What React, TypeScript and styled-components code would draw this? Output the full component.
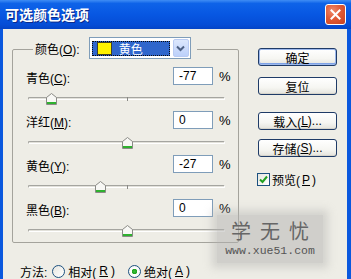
import styled, { createGlobalStyle } from 'styled-components'

const GlobalStyle = createGlobalStyle`
   html, body {
      margin: 0;
      padding: 0;
      overflow: hidden;
      background: #eeede6;
   }
   * {
      box-sizing: border-box;
   }
`

const FONT = `"Liberation Sans", "Noto Sans CJK SC", sans-serif`

const sliders = [
   { name: '青色', key: 'C', value: -77 },
   { name: '洋红', key: 'M', value: 0 },
   { name: '黄色', key: 'Y', value: -27 },
   { name: '黑色', key: 'B', value: 0 },
]

const Mnemonic = ({ text, k, tail = '' }: { text: string; k: string; tail?: string }) => (
   <>
      {text}(<U>{k}</U>){tail}
   </>
)

const Thumb = () => (
   <svg width="11" height="12" viewBox="0 0 11 12">
      <path d="M0.5 4.5 L5.5 0.5 L10.5 4.5 V11.5 H0.5 Z" fill="#f8f8f5" stroke="#8a8a86" />
      <rect x="1" y="9" width="9" height="2" fill="#2fb12f" />
   </svg>
)

const App = () => {
   return (
      <>
         <GlobalStyle />
         <Window>
            <TitleBar>
               <Title>可选颜色选项</Title>
               <CloseButton>
                  <svg width="11" height="11" viewBox="0 0 11 11">
                     <path d="M1.5 1.5 L9.5 9.5 M9.5 1.5 L1.5 9.5" stroke="#fff" strokeWidth="2" strokeLinecap="square" />
                  </svg>
               </CloseButton>
            </TitleBar>
            <Body>
               <Main>
                  <Group>
                     <Legend>
                        <LegendLabel>
                           <Mnemonic text="颜色" k="O" tail=":" />
                        </LegendLabel>
                        <Dropdown>
                           <Selected>
                              <Swatch />
                              <SelectedText>黄色</SelectedText>
                           </Selected>
                           <Arrow>
                              <svg width="9" height="7" viewBox="0 0 9 7">
                                 <path d="M1 1.5 L4.5 5 L8 1.5" stroke="#4d6185" strokeWidth="2" fill="none" />
                              </svg>
                           </Arrow>
                        </Dropdown>
                     </Legend>
                     {sliders.map((s) => (
                        <SliderBlock key={s.key}>
                           <LabelRow>
                              <RowLabel>
                                 <Mnemonic text={s.name} k={s.key} tail=":" />
                              </RowLabel>
                              <ValueBox>{s.value}</ValueBox>
                              <Percent>%</Percent>
                           </LabelRow>
                           <SliderArea>
                              <Track>
                                 <Tick />
                                 <ThumbWrap style={{ left: `${50 + s.value / 2}%` }}>
                                    <Thumb />
                                 </ThumbWrap>
                              </Track>
                           </SliderArea>
                        </SliderBlock>
                     ))}
                  </Group>
                  <ButtonColumn>
                     <Button $default $mt={17}>确定</Button>
                     <Button $mt={11}>复位</Button>
                     <Button $mt={17}>
                        <Mnemonic text="载入" k="L" tail="..." />
                     </Button>
                     <Button $mt={9}>
                        <Mnemonic text="存储" k="S" tail="..." />
                     </Button>
                     <CheckRow>
                        <CheckBox>
                           <svg width="9" height="9" viewBox="0 0 9 9">
                              <path d="M1 4.5 L3.5 7 L8 1.5" stroke="#21a121" strokeWidth="2" fill="none" />
                           </svg>
                        </CheckBox>
                        <Mnemonic text="预览" k="P" />
                     </CheckRow>
                  </ButtonColumn>
               </Main>
               <MethodRow>
                  <span>方法:</span>
                  <RadioOption $ml={5}>
                     <Radio />
                     <Mnemonic text="相对" k="R" />
                  </RadioOption>
                  <RadioOption $ml={13}>
                     <Radio $checked />
                     <Mnemonic text="绝对" k="A" />
                  </RadioOption>
               </MethodRow>
               <Watermark>
                  <WatermarkTitle>学无忧</WatermarkTitle>
                  <WatermarkUrl>www.xue51.com</WatermarkUrl>
               </Watermark>
            </Body>
         </Window>
      </>
   )
}

export default App

const Window = styled.div`
   width: 351px;
   height: 279px;
   display: flex;
   flex-direction: column;
   background: #0a58de;
   overflow: hidden;
   font-family: ${FONT};
   font-size: 12px;
   color: #000;
`
const TitleBar = styled.div`
   height: 29px;
   flex-shrink: 0;
   display: flex;
   align-items: center;
   justify-content: space-between;
   padding: 0 5px 1px 5px;
   background: linear-gradient(
      to bottom,
      #3f8df4 0,
      #0e63e8 12%,
      #0757e2 50%,
      #054dd6 85%,
      #0444c6 100%
   );
`
const Title = styled.div`
   color: #fff;
   font-family: "Noto Sans CJK SC", sans-serif;
   font-weight: bold;
   font-size: 14px;
   text-shadow: 1px 1px 0 #0a2a8a;
`
const CloseButton = styled.div`
   width: 21px;
   height: 21px;
   border: 1px solid #fff;
   border-radius: 3px;
   background: radial-gradient(circle at 35% 30%, #f08a6c 0, #e05a36 45%, #c8401e 100%);
   display: flex;
   align-items: center;
   justify-content: center;
`
const Body = styled.div`
   flex: 1;
   position: relative;
   margin: 0 4px 0 3px;
   background: #eeede6;
   padding: 2px 0 0 9px;
`
const Main = styled.div`
   display: flex;
   align-items: flex-start;
`
const Group = styled.fieldset`
   width: 227px;
   margin: 0;
   padding: 0 7px 2px 13px;
   border: 1px solid #a4a39c;
   border-radius: 2px;
`
const Legend = styled.legend`
   display: flex;
   align-items: center;
   margin-left: 7px;
   padding: 6px 6px 8px 2px;
`
const LegendLabel = styled.span`
   margin-right: 9px;
`
const U = styled.span`
   text-decoration: underline;
`
const Dropdown = styled.div`
   width: 102px;
   height: 22px;
   display: flex;
   padding: 1px;
   border: 1px solid #7f9db9;
   background: #fff;
`
const Selected = styled.div`
   flex: 1;
   margin: 2px 3px 1px 1px;
   display: flex;
   align-items: center;
   padding-left: 5px;
   background: #2f66cc;
   outline: 1px dotted #0a0a0a;
   outline-offset: -1px;
`
const Swatch = styled.div`
   width: 15px;
   height: 13px;
   background: #fff200;
   border: 1px solid #40402a;
`
const SelectedText = styled.span`
   color: #fff;
   margin-left: 7px;
   font-size: 12px;
`
const Arrow = styled.div`
   width: 16px;
   display: flex;
   align-items: center;
   justify-content: center;
   border-radius: 2px;
   border: 1px solid #b9cbf3;
   background: linear-gradient(to bottom, #dce7fd, #bcd0fa);
`
const SliderBlock = styled.div`
   & + & {
      margin-top: 3px;
   }
`
const LabelRow = styled.div`
   height: 18px;
   display: flex;
   align-items: center;
`
const RowLabel = styled.span`
   flex: 1;
   padding-top: 2px;
`
const ValueBox = styled.div`
   width: 40px;
   height: 18px;
   border: 1px solid #7f9db9;
   background: #fff;
   padding-left: 5px;
   line-height: 16px;
`
const Percent = styled.span`
   width: 12px;
   margin-left: 6px;
   font-size: 13px;
`
const SliderArea = styled.div`
   height: 20px;
   margin: 3px 6px 0 2px;
   display: flex;
   align-items: center;
`
const Track = styled.div`
   position: relative;
   width: 100%;
   height: 3px;
   border-radius: 2px;
   border-top: 1px solid #a5a5a0;
   border-left: 1px solid #a5a5a0;
   border-bottom: 1px solid #ffffff;
   border-right: 1px solid #ffffff;
   background: #e2e1da;
`
const Tick = styled.div`
   position: absolute;
   left: 50%;
   top: -1px;
   width: 1px;
   height: 4px;
   background: #8a8a86;
`
const ThumbWrap = styled.div`
   position: absolute;
   top: -5px;
   width: 11px;
   height: 12px;
   margin-left: -5px;
   display: flex;
`
const ButtonColumn = styled.div`
   display: flex;
   flex-direction: column;
   margin-left: 19px;
`
const Button = styled.div<{ $default?: boolean; $mt: number }>`
   width: 79px;
   height: 18px;
   margin-top: ${(p) => p.$mt}px;
   display: flex;
   align-items: center;
   justify-content: center;
   border: 1px solid #1f3b67;
   border-radius: 3px;
   background: linear-gradient(to bottom, #ffffff 0, #f6f6f2 60%, #e4e3dc 100%);
   box-shadow: ${(p) => (p.$default ? 'inset 0 0 0 1px #9cb8ec, inset 0 -1px 0 1px #7ea2e6' : 'inset 0 -1px 0 #d6d4cb')};
   font-size: 12px;
`
const CheckRow = styled.div`
   display: flex;
   align-items: center;
   margin-top: 14px;
   margin-left: -1px;
   gap: 2px;
`
const CheckBox = styled.div`
   width: 13px;
   height: 13px;
   border: 1px solid #1c5180;
   background: linear-gradient(135deg, #e6e6e0, #ffffff);
   display: flex;
   align-items: center;
   justify-content: center;
`
const MethodRow = styled.div`
   display: flex;
   align-items: center;
   height: 16px;
   margin-top: 20px;
   margin-left: 8px;
`
const RadioOption = styled.div<{ $ml: number }>`
   display: flex;
   align-items: center;
   gap: 3px;
   margin-left: ${(p) => p.$ml}px;
`
const Radio = styled.div<{ $checked?: boolean }>`
   width: 13px;
   height: 13px;
   border-radius: 50%;
   border: 1px solid #1c5180;
   background: ${(p) =>
      p.$checked
         ? 'radial-gradient(circle, #3ac13a 0, #21a121 2.5px, #ffffff 3px, #f0f0ea 100%)'
         : 'linear-gradient(135deg, #e6e6e0, #ffffff)'};
`
const Watermark = styled.div`
   position: absolute;
   left: 214px;
   top: 186px;
   width: 106px;
   height: 48px;
   display: flex;
   flex-direction: column;
   align-items: center;
   justify-content: center;
   gap: 2px;
   background: rgba(178, 178, 176, 0.5);
   box-shadow: 0 0 8px 5px rgba(178, 178, 176, 0.45);
`
const WatermarkTitle = styled.div`
   font-family: "Noto Sans CJK SC", serif;
   font-size: 20px;
   line-height: 22px;
   letter-spacing: 9px;
   margin-right: -9px;
   color: #666;
`
const WatermarkUrl = styled.div`
   font-family: "Liberation Mono", monospace;
   font-size: 11.5px;
   line-height: 14px;
   color: #555;
`
